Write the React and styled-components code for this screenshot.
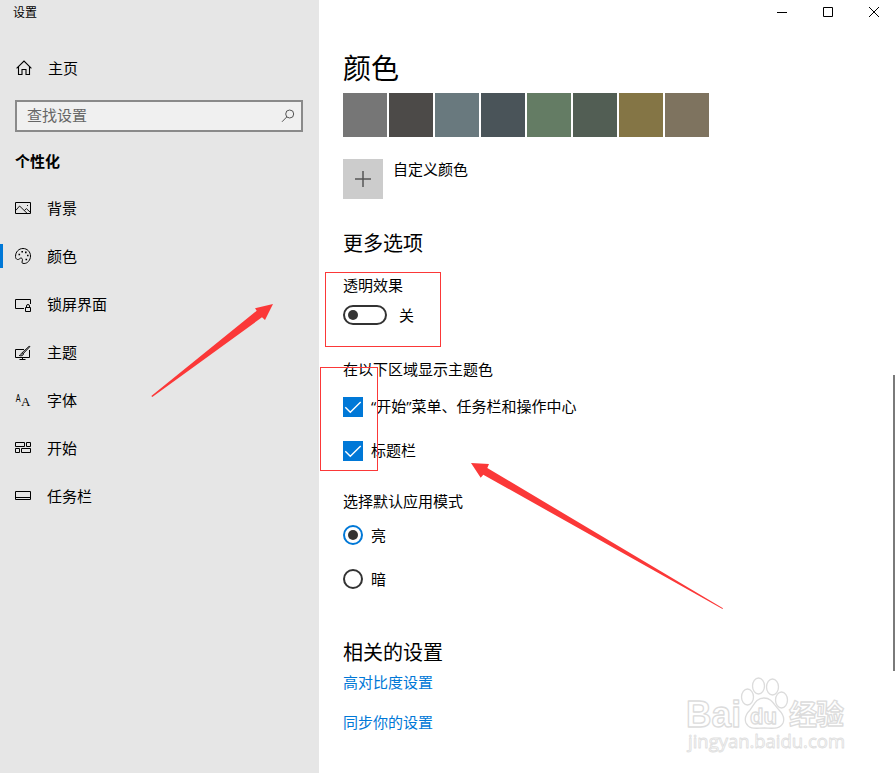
import React, { useState } from 'react';
import styled, { createGlobalStyle } from 'styled-components';

const colors = {
  accent: '#0078d7',
  sidebar: '#e6e6e6',
  dark: '#333333',
  mark: '#fb3838'
};

const GlobalStyle = createGlobalStyle`
  * {
    box-sizing: border-box;
  }

  body {
    margin: 0;
    background: #fff;
    color: #000;
    font-family: 'Open Sans', 'Noto Sans CJK SC', sans-serif;
    font-size: 15px;
    overflow: hidden;
  }
`;

const Window = styled.div`
  display: flex;
  height: 773px;
  overflow: hidden;
  position: relative;
  width: 895px;
`;

const Sidebar = styled.aside`
  background: ${colors.sidebar};
  display: flex;
  flex-direction: column;
  width: 319px;
`;

const WindowTitle = styled.div`
  font-size: 12px;
  height: 24px;
  line-height: 26px;
  padding-left: 13px;
`;

const HomeLink = styled.div`
  align-items: center;
  display: flex;
  gap: 16px;
  height: 40px;
  margin-top: 24px;
  padding-left: 16px;
`;

const SearchBox = styled.div`
  align-items: center;
  background: #f0f0f0;
  border: 2px solid #8a8a8a;
  color: #666;
  display: flex;
  height: 32px;
  justify-content: space-between;
  line-height: 28px;
  margin: 12px 16px 0 15px;
  padding: 0 6px 0 10px;
`;

const GroupTitle = styled.div`
  font-weight: 700;
  height: 32px;
  line-height: 30px;
  margin: 14px 0 6px;
  padding-left: 15px;
`;

const NavItem = styled.div`
  align-items: center;
  display: flex;
  gap: 16px;
  height: 48px;
  padding-left: 12px;
  border-left: 3px solid transparent;
  border-image: ${({ $active }) =>
    $active
      ? `linear-gradient(transparent 12px, ${colors.accent} 12px, ${colors.accent} 36px, transparent 36px) 0 0 0 3`
      : 'none'};
`;

const Text = styled.span`
  padding-bottom: 2px;
`;

const Icon = styled.svg`
  display: block;
  fill: none;
  flex: none;
  height: 16px;
  stroke: #000;
  stroke-width: 1;
  width: 16px;

  text {
    fill: #000;
    stroke: none;
  }
`;

const Main = styled.main`
  display: flex;
  flex: 1;
  flex-direction: column;
  padding-left: 24px;
`;

const WindowButtons = styled.div`
  display: flex;
  height: 24px;
  justify-content: flex-end;
  margin-right: -2px;
`;

const WindowButton = styled.div`
  display: flex;
  justify-content: center;
  padding-top: 4px;
  width: 46px;
`;

const PageTitle = styled.h1`
  font-size: 28px;
  font-weight: 400;
  height: 40px;
  line-height: 40px;
  margin: 24px 0 5px;
`;

const Swatches = styled.div`
  display: flex;
  gap: 2px;
`;

const Swatch = styled.div`
  background: ${({ $color }) => $color};
  height: 44px;
  width: 44px;
`;

const CustomColor = styled.div`
  display: flex;
  gap: 10px;
  line-height: 20px;
  margin-top: 22px;
`;

const AddButton = styled.div`
  align-items: center;
  background: #ccc;
  display: flex;
  height: 40px;
  justify-content: center;
  width: 40px;
`;

const SectionTitle = styled.h2`
  font-size: 20px;
  font-weight: 400;
  height: 30px;
  line-height: 32px;
  margin: ${({ $top }) => $top}px 0 0;
`;

const Label = styled.div`
  height: 20px;
  line-height: 20px;
  margin-top: ${({ $top }) => $top}px;
`;

const Option = styled.div`
  align-items: center;
  display: flex;
  gap: ${({ $gap }) => $gap || 8}px;
  height: 20px;
  line-height: 20px;
  margin-top: ${({ $top }) => $top}px;
`;

const Toggle = styled.div`
  align-items: center;
  border: 2px solid ${colors.dark};
  border-radius: 10px;
  display: flex;
  height: 20px;
  justify-content: ${({ $on }) => ($on ? 'flex-end' : 'flex-start')};
  padding: 0 3px;
  width: 44px;

  &::after {
    background: ${colors.dark};
    border-radius: 50%;
    content: '';
    height: 10px;
    width: 10px;
  }
`;

const Checkbox = styled.div`
  background: ${colors.accent};
  height: 20px;
  width: 20px;
`;

const Radio = styled.div`
  align-items: center;
  border: 2px solid ${({ $checked }) => ($checked ? colors.accent : colors.dark)};
  border-radius: 50%;
  display: flex;
  height: 20px;
  justify-content: center;
  width: 20px;

  &::after {
    background: ${({ $checked }) => ($checked ? colors.dark : 'transparent')};
    border-radius: 50%;
    content: '';
    height: 10px;
    width: 10px;
  }
`;

const Link = styled.a`
  color: ${colors.accent};
  height: 20px;
  line-height: 20px;
  margin-top: ${({ $top }) => $top}px;
`;

const Scrollbar = styled.div`
  background: #7a7a7a;
  height: 296px;
  position: absolute;
  right: 0;
  top: 375px;
  width: 2px;
`;

const Overlay = styled.svg`
  left: 0;
  pointer-events: none;
  position: absolute;
  top: 0;
`;

const icons = {
  home: <path d="M.6 8.400 8 1l7.400 7.400M2.500 6.800v7.700h3.500v-5h4v5h3.500V6.800" strokeWidth="1.1" />,
  background: (
    <>
      <path d="M.5 2.500h15v11H.5z" />
      <path d="M.8 10.400 4.600 6l7.600 7.400M9.400 10.500l2-1.900 4 3.800M12 5.500h1" strokeWidth=".9" />
    </>
  ),
  palette: (
    <>
      <path d="M.5 8.600C.5 3.800 3.800.5 8 .5s7.500 3.300 7.500 7.500-3 7.500-6.400 7.500c-2.200 0-2.500-.8-1.800-2.600.7-2-.7-3.400-2-2.700-.8.500-1.400 1.500-2.800 1.300C1.200 11.200.5 10 .5 8.600z" />
      <path
        d="M3.500 6.500h1.600M6.400 3.700H8M10 4.400h1.600M12 7.500h1.600M10.500 11.500h1.600"
        strokeWidth="1.6"
      />
    </>
  ),
  lock: (
    <>
      <path d="M9 12.500H.5v-9h15V8" />
      <path d="M10.500 11.500h5v4h-5zM11.500 11.500V10a1.500 1.500 0 0 1 3 0v1.500" />
    </>
  ),
  theme: (
    <>
      <path d="M9 5.500H.5v8h14V6M7.500 13.500v2M4.500 15.500h6" />
      <path
        fill="#999"
        strokeWidth=".8"
        d="m15 2.500-6.500 7-1.200-1L14 2.300zM8 9c-1.500-.4-2 .6-2.200 1.500-.2.700-.8 1-1.600 1 2.300.8 4.300.2 4.300-1.800z"
      />
    </>
  ),
  font: (
    <>
      <text x=".8" y="10" fontFamily="Liberation Sans" fontSize="10" textLength="4.8" lengthAdjust="spacingAndGlyphs">
        A
      </text>
      <text x="6" y="14" fontFamily="Liberation Serif" fontSize="13">
        A
      </text>
    </>
  ),
  start: <path d="M.5 2.500h9v4h-9zM11.500 2.500h4v4h-4zM.5 8.500h4v4h-4zM6.500 8.500h9v4h-9z" />,
  taskbar: <path d="M.5 3.500h15v8H.5zM.5 9.500h15" />
};

const navItems = [
  { icon: 'background', name: '背景' },
  { icon: 'palette', name: '颜色' },
  { icon: 'lock', name: '锁屏界面' },
  { icon: 'theme', name: '主题' },
  { icon: 'font', name: '字体' },
  { icon: 'start', name: '开始' },
  { icon: 'taskbar', name: '任务栏' }
];

const swatches = [
  '#767676',
  '#4c4a48',
  '#69797e',
  '#4a5459',
  '#647c64',
  '#525e54',
  '#847545',
  '#7e735f'
];

const Glyph = ({ name }) => <Icon viewBox="0 0 16 16">{icons[name]}</Icon>;

const Check = ({ checked, onClick }) => (
  <Checkbox onClick={onClick}>
    {checked && (
      <svg width="20" height="20" fill="none" stroke="#fff" strokeWidth="1.4">
        <path d="m2.300 10.300 5 5L17.700 4.900" />
      </svg>
    )}
  </Checkbox>
);

const Watermark = () => (
  <g
    fill="#fff"
    stroke="#dcdcdc"
    strokeWidth="1.3"
    strokeLinejoin="round"
    fontFamily="Liberation Sans"
    fontWeight="700"
  >
    <text x="686" y="727" fontSize="36" textLength="55" lengthAdjust="spacingAndGlyphs">
      Bai
    </text>
    <ellipse cx="747.5" cy="697" rx="6" ry="8" />
    <ellipse cx="758.5" cy="686" rx="6" ry="8" />
    <ellipse cx="772.5" cy="687" rx="6" ry="8" />
    <ellipse cx="781.5" cy="700" rx="6" ry="8" />
    <path d="M764 698c-8 0-10 7-14 12-4 4-6 8-4 13 3 7 11 5 18 5s16 2 19-5c2-5 0-9-4-13-5-5-7-12-15-12z" />
    <text x="750" y="724" fontSize="22" textLength="27" lengthAdjust="spacingAndGlyphs">
      du
    </text>
    <text x="789" y="725" fontSize="28" fontFamily="Noto Sans CJK SC" textLength="55">
      经验
    </text>
    <text
      x="688"
      y="748"
      fontFamily="Open Sans"
      fontSize="19"
      fontWeight="400"
      stroke="#e0e0e0"
      strokeWidth=".9"
      textLength="157"
      lengthAdjust="spacingAndGlyphs"
    >
      jingyan.baidu.com
    </text>
  </g>
);

const App = () => {
  const [selected, setSelected] = useState('颜色');
  const [transparent, setTransparent] = useState(false);
  const [startAccent, setStartAccent] = useState(true);
  const [titleAccent, setTitleAccent] = useState(true);
  const [mode, setMode] = useState('light');

  return (
    <Window>
      <GlobalStyle />
      <Sidebar>
        <WindowTitle>设置</WindowTitle>
        <HomeLink>
          <Glyph name="home" />
          <Text>主页</Text>
        </HomeLink>
        <SearchBox>
          <Text>查找设置</Text>
          <svg width="14" height="14" fill="none" stroke="#555">
            <circle cx="8.7" cy="5" r="4" />
            <path d="M5.800 7.900 1 12.800" />
          </svg>
        </SearchBox>
        <GroupTitle>个性化</GroupTitle>
        {navItems.map(({ icon, name }) => (
          <NavItem key={name} $active={selected === name} onClick={() => setSelected(name)}>
            <Glyph name={icon} />
            <Text>{name}</Text>
          </NavItem>
        ))}
      </Sidebar>
      <Main>
        <WindowButtons>
          <WindowButton>
            <Icon viewBox="0 0 16 16">
              <path d="M3 8.500h10" />
            </Icon>
          </WindowButton>
          <WindowButton>
            <Icon viewBox="0 0 16 16">
              <path d="M3.500 3.500h9v9h-9z" />
            </Icon>
          </WindowButton>
          <WindowButton>
            <Icon viewBox="0 0 16 16">
              <path d="m3 3 10 10M13 3 3 13" />
            </Icon>
          </WindowButton>
        </WindowButtons>
        <PageTitle>颜色</PageTitle>
        <Swatches>
          {swatches.map(color => (
            <Swatch key={color} $color={color} />
          ))}
        </Swatches>
        <CustomColor>
          <AddButton>
            <svg width="16" height="16" stroke="#555" strokeWidth="1.5">
              <path d="M8 0v16M0 8h16" />
            </svg>
          </AddButton>
          自定义颜色
        </CustomColor>

        <SectionTitle $top={29}>更多选项</SectionTitle>
        <Label $top={17}>透明效果</Label>
        <Option $top={10} $gap={12}>
          <Toggle $on={transparent} onClick={() => setTransparent(!transparent)} />
          {transparent ? '开' : '关'}
        </Option>
        <Label $top={34}>在以下区域显示主题色</Label>
        <Option $top={18}>
          <Check checked={startAccent} onClick={() => setStartAccent(!startAccent)} />
          <Text>“开始”菜单、任务栏和操作中心</Text>
        </Option>
        <Option $top={24}>
          <Check checked={titleAccent} onClick={() => setTitleAccent(!titleAccent)} />
          <Text>标题栏</Text>
        </Option>
        <Label $top={30}>选择默认应用模式</Label>
        <Option $top={14}>
          <Radio $checked={mode === 'light'} onClick={() => setMode('light')} />
          亮
        </Option>
        <Option $top={24}>
          <Radio $checked={mode === 'dark'} onClick={() => setMode('dark')} />
          暗
        </Option>

        <SectionTitle $top={48}>相关的设置</SectionTitle>
        <Link $top={5}>高对比度设置</Link>
        <Link $top={20}>同步你的设置</Link>
      </Main>
      <Scrollbar />
      <Overlay width="895" height="773">
        <Watermark />
        <g fill="none" stroke={colors.mark}>
          <rect x="325.5" y="272.5" width="115" height="74" />
          <rect x="320.5" y="367.5" width="57" height="103" />
        </g>
        <g fill={colors.mark}>
          <path d="M273 304 255 308.300 256.700 310.700 151.300 396 152.300 397 262 317.300 265 320z" />
          <path d="M471 463 489 464 487.300 468 723 608.300 722.500 609 483.300 474.700 480.700 477.700z" />
        </g>
      </Overlay>
    </Window>
  );
};

export default App;
